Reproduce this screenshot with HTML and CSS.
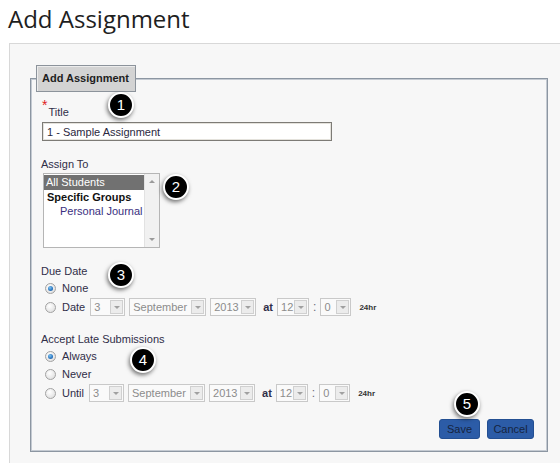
FILE: index.html
```html
<!DOCTYPE html>
<html>
<head>
    <title>Add Assignment</title>
    <link rel="stylesheet" href="styles.css">
</head>
<body>
    <h1 class="page-title">Add Assignment</h1>
    <div class="panel">
        <fieldset class="box">
            <legend>Add Assignment</legend>

            <div class="field title-field">
                <label class="lbl"><span class="req">*</span>Title</label>
                <input class="text" type="text" value="1 - Sample Assignment">
            </div>

            <div class="field">
                <label class="lbl">Assign To</label>
                <div class="listbox">
                    <div class="opts">
                        <div class="opt sel">All Students</div>
                        <div class="opt grp">Specific Groups</div>
                        <div class="opt sub">Personal Journal</div>
                    </div>
                    <div class="vscroll"><span class="up"></span><span class="down"></span></div>
                </div>
            </div>

            <div class="field">
                <label class="lbl">Due Date</label>
                <div class="radio-row"><span class="radio on"></span><span class="rtext">None</span></div>
                <div class="radio-row date-row">
                    <span class="radio"></span><span class="rtext">Date</span>
                    <span class="dd day"><span class="val">3</span><span class="arr"></span></span>
                    <span class="dd month"><span class="val">September</span><span class="arr"></span></span>
                    <span class="dd year"><span class="val">2013</span><span class="arr"></span></span>
                    <span class="at">at</span>
                    <span class="dd hour"><span class="val">12</span><span class="arr"></span></span>
                    <span class="colon">:</span>
                    <span class="dd minute"><span class="val">0</span><span class="arr"></span></span>
                    <span class="hr">24hr</span>
                </div>
            </div>

            <div class="field">
                <label class="lbl">Accept Late Submissions</label>
                <div class="radio-row"><span class="radio on"></span><span class="rtext">Always</span></div>
                <div class="radio-row"><span class="radio"></span><span class="rtext">Never</span></div>
                <div class="radio-row date-row">
                    <span class="radio"></span><span class="rtext">Until</span>
                    <span class="dd day"><span class="val">3</span><span class="arr"></span></span>
                    <span class="dd month"><span class="val">September</span><span class="arr"></span></span>
                    <span class="dd year"><span class="val">2013</span><span class="arr"></span></span>
                    <span class="at">at</span>
                    <span class="dd hour"><span class="val">12</span><span class="arr"></span></span>
                    <span class="colon">:</span>
                    <span class="dd minute"><span class="val">0</span><span class="arr"></span></span>
                    <span class="hr">24hr</span>
                </div>
            </div>

            <div class="actions">
                <button class="btn save">Save</button>
                <button class="btn cancel">Cancel</button>
            </div>
        </fieldset>
    </div>

    <!-- callout markers -->
    <span class="marker m1">1</span>
    <span class="marker m2">2</span>
    <span class="marker m3">3</span>
    <span class="marker m4">4</span>
    <span class="marker m5">5</span>
</body>
</html>
```

FILE: styles.css
```css
body {
    margin: 0;
    overflow: hidden;
    background: #fff;
    font-family: "Liberation Sans", Arial, sans-serif;
    font-size: 11px;
    color: #302e48;
}

.page-title {
    margin: 0 0 6px 8px;
    font-family: "Open Sans", sans-serif;
    font-weight: 400;
    font-size: 24px;
    line-height: 37px;
    color: #1e1e1e;
}

.panel {
    margin-left: 9px;
    border-top: 1px solid #d8d8d8;
    border-left: 1px solid #d8d8d8;
    background: #f7f7f7;
    padding: 21px 12px 12px 20px;
}

.box {
    margin: 0;
    padding: 0 13px 12px 10px;
    border: 1px solid #8c96a2;
    box-shadow: inset 0 0 0 1px #c4cad2;
}

.box legend {
    margin-left: -5px;
    height: 27px;
    box-sizing: border-box;
    padding: 0 6px 0 5px;
    line-height: 25px;
    font-weight: bold;
    font-size: 11px;
    color: #1e1e1e;
    background: #d3d3d3;
    border: 1px solid #8c939b;
    box-shadow: inset 1px 1px 0 #ececec;
}

.field {
    display: flex;
    flex-direction: column;
    align-items: flex-start;
    margin-top: 16px;
}
.title-field {
    margin-top: 12px;
}

.lbl {
    line-height: 14px;
    height: 14px;
}
.req {
    color: #e02020;
    font-size: 14px;
    position: relative;
    top: -6px;
    margin: 0 1px 0 1px;
}

.text {
    margin: 4px 0 0 1px;
    width: 290px;
    height: 19px;
    box-sizing: border-box;
    border: 1px solid #7d7b76;
    box-shadow: inset 0 0 0 1px #e4e2dc;
    padding: 0 4px;
    font-family: "Liberation Sans", Arial, sans-serif;
    font-size: 11px;
    color: #2a2840;
    background: #fff;
}

.listbox {
    margin: 2px 0 0 2px;
    width: 117px;
    height: 75px;
    box-sizing: border-box;
    border: 1px solid #b5b5b5;
    background: #fff;
    display: flex;
}
.opts {
    flex: 1;
    padding-top: 1px;
}
.opt {
    height: 14.5px;
    line-height: 14px;
    white-space: nowrap;
}
.opt.sel {
    background: #717171;
    color: #fff;
    padding-left: 2px;
}
.opt.grp {
    font-weight: bold;
    color: #111;
    padding-left: 3px;
}
.opt.sub {
    padding-left: 16px;
    color: #3a2f80;
}
.vscroll {
    width: 14px;
    background: #f1f1f1;
    border-left: 1px solid #e2e2e2;
    position: relative;
}
.vscroll span {
    position: absolute;
    left: 4px;
    width: 0;
    height: 0;
    border-left: 3px solid transparent;
    border-right: 3px solid transparent;
}
.vscroll .up {
    top: 6px;
    border-bottom: 3px solid #9a9a9a;
}
.vscroll .down {
    bottom: 6px;
    border-top: 3px solid #9a9a9a;
}

.radio-row {
    display: flex;
    align-items: center;
    height: 16px;
    margin-top: 2px;
    padding-left: 4px;
}
.date-row {
    height: 18px;
}
.radio {
    width: 11px;
    height: 11px;
    box-sizing: border-box;
    border-radius: 50%;
    border: 1px solid #a2a2a2;
    background: radial-gradient(circle at 40% 35%, #ffffff 0%, #e4e4e4 70%, #cfcfcf 100%);
    margin-right: 6px;
    position: relative;
}
.radio.on::after {
    content: "";
    position: absolute;
    left: 2px;
    top: 2px;
    width: 5px;
    height: 5px;
    border-radius: 50%;
    background: radial-gradient(circle at 40% 35%, #7fc4f0 0%, #2a75c0 60%, #17548f 100%);
}
.rtext {
    color: #302e48;
}

.dd {
    display: inline-flex;
    align-items: center;
    height: 18px;
    box-sizing: border-box;
    border: 1px solid #c9c9c9;
    background: #fafafa;
    margin-left: 4px;
}
.rtext + .dd {
    margin-left: 5px;
}
.dd .val {
    flex: 1;
    padding-left: 3px;
    color: #8c8c8c;
    font-size: 11px;
    white-space: nowrap;
    overflow: hidden;
}
.dd .arr {
    flex: none;
    width: 13px;
    height: 14px;
    box-sizing: border-box;
    margin-right: 1px;
    border: 1px solid #d0d0d0;
    background: #ececec;
    position: relative;
}
.dd .arr::after {
    content: "";
    position: absolute;
    left: 3px;
    top: 5px;
    border-left: 3px solid transparent;
    border-right: 3px solid transparent;
    border-top: 3px solid #a0a0a0;
}
.dd.day { width: 35px; }
.dd.month { width: 77px; }
.dd.year { width: 46px; }
.dd.hour { width: 32px; }
.dd.minute { width: 31px; }

.at {
    margin: 0 0 0 7px;
    font-weight: bold;
    color: #302e48;
}
.colon {
    margin-left: 4px;
    color: #6a6a7a;
    font-size: 12px;
}
.hr {
    margin-left: 8px;
    font-size: 8px;
    font-weight: bold;
    color: #333;
}

.actions {
    display: flex;
    justify-content: flex-end;
    gap: 7px;
    margin-top: 17px;
}
.btn {
    height: 20px;
    box-sizing: border-box;
    padding: 0;
    border: 1px solid #234f92;
    border-radius: 3px;
    background: #2c5ca7;
    color: #15243f;
    font-family: "Liberation Sans", Arial, sans-serif;
    font-size: 11px;
    text-align: center;
}
.btn.save { width: 41px; }
.btn.cancel { width: 47px; }

.marker {
    position: absolute;
    width: 26px;
    height: 26px;
    margin: -13px 0 0 -13px;
    box-sizing: border-box;
    border-radius: 50%;
    border: 2px solid #fff;
    background: #000;
    color: #fff;
    font-size: 15px;
    line-height: 22px;
    text-align: center;
    box-shadow: -1px 2px 4px rgba(0, 0, 0, 0.55);
}
.m1 { left: 121px; top: 105px; }
.m2 { left: 176px; top: 187px; }
.m3 { left: 121px; top: 275px; }
.m4 { left: 143px; top: 360px; }
.m5 { left: 467px; top: 404px; }
```
